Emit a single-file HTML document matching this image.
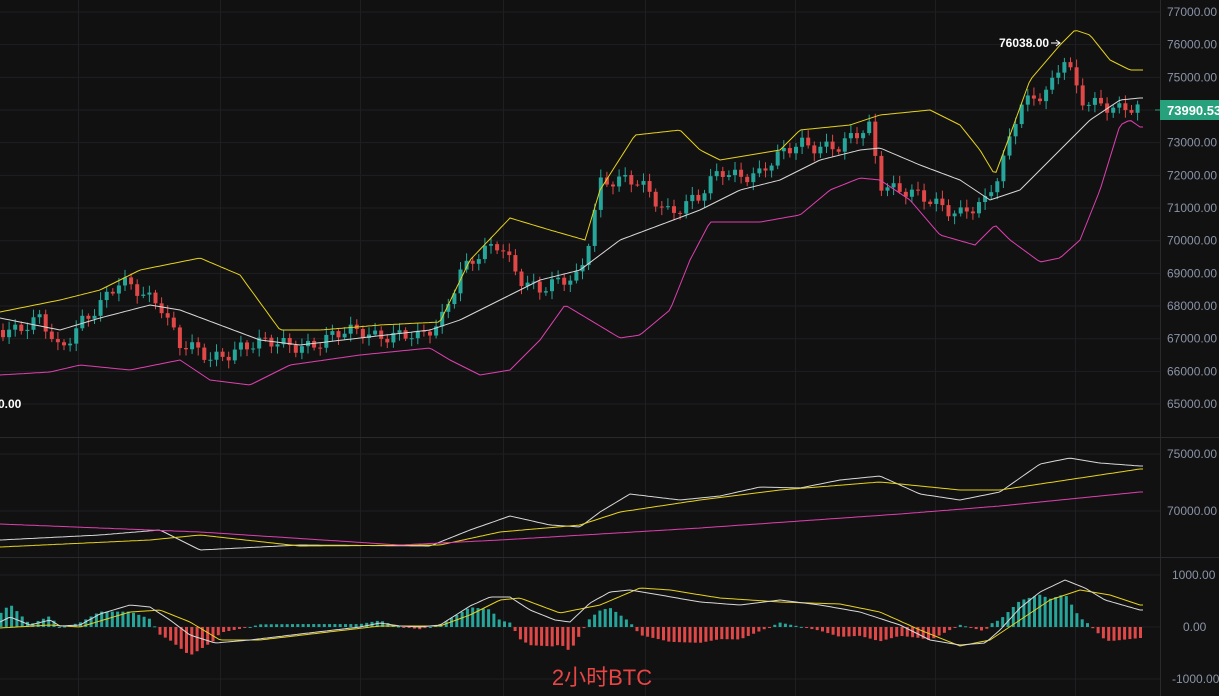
<!DOCTYPE html>
<html><head><meta charset="utf-8"><style>
html,body{margin:0;padding:0;background:#111112;width:1219px;height:696px;overflow:hidden}
svg{display:block}
text{font-family:"Liberation Sans",sans-serif}
</style></head><body>
<svg id="s" width="1219" height="696" xmlns="http://www.w3.org/2000/svg">
<rect width="1219" height="696" fill="#111112"/>
<g id="grid" stroke="#1f1f22" stroke-width="1"></g>
<line x1="0" y1="437.5" x2="1219" y2="437.5" stroke="#2a2a2e"/>
<line x1="0" y1="557.5" x2="1219" y2="557.5" stroke="#2a2a2e"/>
<line x1="1160.5" y1="0" x2="1160.5" y2="696" stroke="#2a2a2e"/>
<g id="c"></g>
<g id="axis" fill="#8a93a6" font-size="12"></g>
<text x="999" y="47" fill="#fff" font-size="12" font-weight="bold">76038.00</text>
<path d="M1051 43 H1060 M1056 40 L1060 43 L1056 46" stroke="#fff" fill="none" stroke-width="1"/>
<text x="-2" y="408" fill="#fff" font-size="12" font-weight="bold">0.00</text>
<rect x="1160" y="100" width="59" height="20" fill="#26a17b"/>
<line x1="1155" y1="110" x2="1160" y2="110" stroke="#26a17b"/>
<text x="1167" y="115" fill="#fff" font-size="13" font-weight="bold">73990.53</text>
<text x="602" y="685" fill="#e84545" font-size="22" text-anchor="middle" font-family="Liberation Sans,Noto Sans CJK SC,sans-serif">2小时BTC</text>
</svg>
<script>
(function(){
var NS="http://www.w3.org/2000/svg",c=document.getElementById('c');
function el(t,a,p){var e=document.createElementNS(NS,t);for(var k in a)e.setAttribute(k,a[k]);(p||c).appendChild(e);return e;}
function interp(pts,x){for(var i=0;i<pts.length-1;i++){if(x<=pts[i+1][0]){var a=pts[i],b=pts[i+1];return a[1]+(b[1]-a[1])*(x-a[0])/(b[0]-a[0]);}}return pts[pts.length-1][1];}
function line(pts,col,w){var d=[];for(var x=0;x<=1145;x+=3)d.push(x+','+interp(pts,x).toFixed(1));el('polyline',{points:d.join(' '),fill:'none',stroke:col,'stroke-width':w||1});}
var g=document.getElementById('grid');
[78,220,360,503,645,795,935,1075].forEach(function(x){el('line',{x1:x+.5,y1:0,x2:x+.5,y2:696},g);});
var ax=document.getElementById('axis');
for(var p=77000;p>=65000;p-=1000){var y=12+(77000-p)/1000*32.67;el('line',{x1:0,y1:y,x2:1160,y2:y},g);if(p!=74000){var t=el('text',{x:1167,y:y+4},ax);t.textContent=p+'.00';}}
[[75000,454],[70000,511]].forEach(function(a){el('line',{x1:0,y1:a[1],x2:1160,y2:a[1]},g);var t=el('text',{x:1167,y:a[1]+4},ax);t.textContent=a[0]+'.00';});
[['1000.00',575,1172],['0.00',627,1183],['-1000.00',679,1172]].forEach(function(a){el('line',{x1:0,y1:a[1],x2:1160,y2:a[1]},g);var t=el('text',{x:a[2],y:a[1]+4},ax);t.textContent=a[0];});
var mid=[[0,318],[60,330],[100,318],[150,305],[180,310],[220,325],[260,340],[300,345],[360,338],[430,330],[460,320],[500,300],[540,280],[580,270],[620,240],[660,225],[700,210],[740,190],[780,180],[820,160],[860,150],[880,148],[920,165],[960,180],[990,200],[1020,190],[1060,150],[1090,120],[1120,100],[1140,98]];
var up=[[0,312],[60,300],[100,290],[140,270],[200,258],[240,275],[280,330],[320,330],[380,325],[440,322],[470,260],[510,218],[550,230],[585,240],[600,190],[635,135],[680,130],[700,150],[720,160],[780,150],[800,130],[850,125],[880,115],[930,110],[960,125],[980,150],[995,175],[1010,135],[1030,80],[1060,45],[1075,30],[1090,35],[1110,60],[1130,70],[1140,70]];
var lo=[[0,375],[50,372],[80,365],[130,370],[180,360],[210,380],[250,385],[290,365],[360,355],[430,348],[450,360],[480,375],[510,370],[540,340],[565,305],[590,320],[620,338],[640,335],[670,310],[690,260],[710,222],[760,222],[800,215],[830,190],[860,178],[880,180],[910,200],[940,235],[975,245],[995,225],[1010,240],[1040,262],[1060,258],[1080,240],[1100,190],[1120,125],[1130,120],[1140,127]];
var pr=[[0,330],[40,320],[60,355],[80,320],[120,285],[160,300],[180,345],[210,360],[240,345],[280,345],[320,342],[360,330],[420,340],[440,320],[460,270],[500,245],[520,275],[540,290],[560,285],[580,275],[590,230],[600,180],[640,185],[670,210],[700,200],[720,170],[760,175],[800,140],[840,150],[870,125],[880,180],[920,200],[960,210],[985,205],[1000,175],[1020,100],[1050,90],[1065,60],[1080,100],[1100,100],[1120,110],[1140,112]];
var G='#26a69a',R='#e04848';
var prev=interp(pr,0),i=0;
for(var x=3;x<1142;x+=6.1){i++;var cl=interp(pr,x)+Math.sin(i*1.7)*6+Math.sin(i*0.53)*4;var o=prev;var col=cl<o?G:R;var tp=Math.min(o,cl),bt=Math.max(o,cl);
el('line',{x1:x,y1:tp-2-Math.abs(Math.sin(i*2.3))*6,x2:x,y2:bt+2+Math.abs(Math.cos(i*1.9))*6,stroke:col});
el('rect',{x:x-2,y:tp,width:4,height:Math.max(1,bt-tp),fill:col});prev=cl;}
line(up,'#e6d21c');line(mid,'#d8d8d8');line(lo,'#e040b0');
line([[0,540],[100,535],[160,530],[200,550],[300,545],[430,546],[470,530],[510,516],[550,525],[580,527],[600,512],[630,494],[680,500],[720,496],[760,487],[800,488],[840,480],[880,476],[920,494],[960,500],[1000,492],[1040,464],[1070,458],[1100,463],[1140,466]],'#d8d8d8');
line([[0,547],[150,540],[200,535],[300,546],[440,545],[500,532],[580,525],[620,512],[700,500],[780,490],[880,482],[960,490],[1000,490],[1040,484],[1080,478],[1140,469]],'#e6d21c');
line([[0,524],[200,532],[400,545],[500,540],[700,528],[900,514],[1000,506],[1140,492]],'#e040b0');
var dif=[[0,622],[10,617],[30,625],[50,620],[60,626],[80,625],[100,614],[130,605],[150,607],[170,620],[190,635],[215,643],[250,640],[300,634],[360,627],[380,623],[400,626],[420,627],[440,625],[470,606],[490,597],[510,597],[530,610],[555,620],[570,622],[590,603],[610,592],[630,590],[660,595],[700,602],[740,605],[780,600],[820,605],[860,612],[900,625],[930,640],[960,645],[985,643],[1000,630],[1020,608],[1040,592],[1065,580],[1085,588],[1105,600],[1140,610]];
var dea=[[0,628],[50,625],[80,627],[130,612],[160,610],[190,622],[220,640],[260,640],[320,633],[380,626],[440,626],[470,615],[500,600],[520,598],[560,613],[600,605],[640,588],[670,590],[720,598],[780,602],[840,604],[880,612],[920,630],[960,646],[990,640],[1020,620],[1050,600],[1080,590],[1110,595],[1140,605]];
for(var x=1;x<1142;x+=5.3){var h=(interp(dea,x)-interp(dif,x))*2.2;var col=h>0?G:R;el('rect',{x:x-1.5,y:h>0?627-h:627,width:3,height:Math.max(1,Math.abs(h)),fill:col});}
line(dea,'#e6d21c');line(dif,'#d8d8d8');
})();
</script>
</body></html>
